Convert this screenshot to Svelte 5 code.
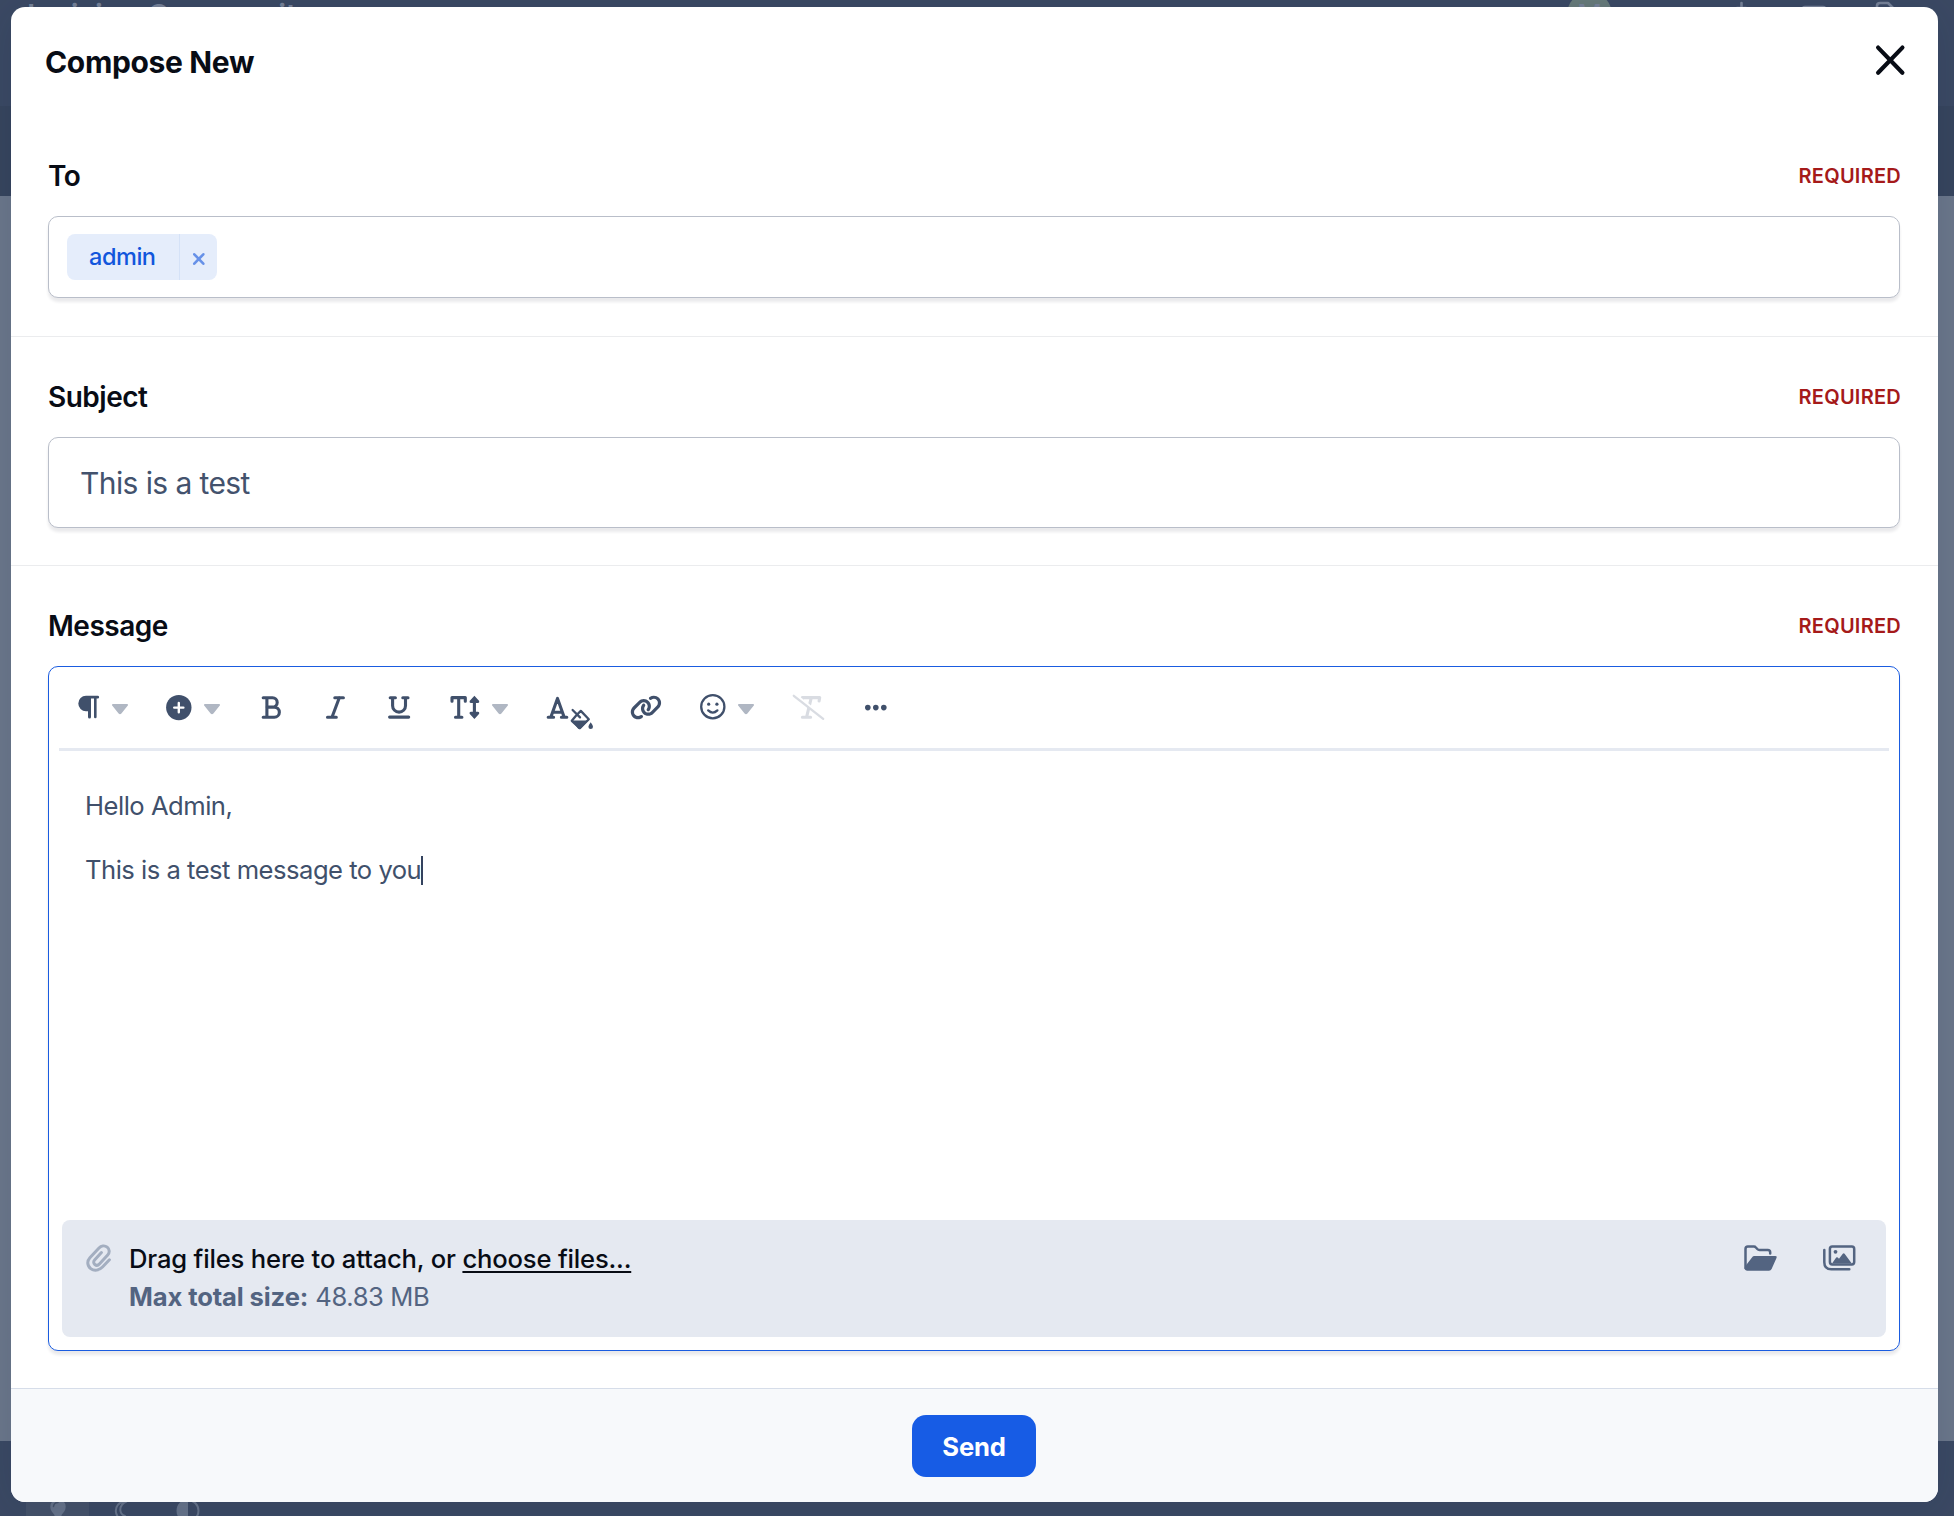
<script>
	let recipients = $state(['admin']);
	let subject = $state('This is a test');
	let message = ['Hello Admin,', 'This is a test message to you'];

	function removeRecipient(name) {
		recipients = recipients.filter((r) => r !== name);
	}
</script>

{#snippet caret()}
	<svg class="caret" width="16" height="41" viewBox="0 0 16 41">
		<path
			d="M1.2 17H14.8a1 1 0 0 1 .8 1.8L9.4 26.4a1.9 1.9 0 0 1-2.8 0L.4 18.8A1 1 0 0 1 1.2 17Z"
		/>
	</svg>
{/snippet}

{#snippet fieldHead(label)}
	<div class="field-head">
		<span class="label">{label}</span>
		<span class="required">REQUIRED</span>
	</div>
{/snippet}

<div class="page">
	<header class="site-header">
		<span class="site-name">Invision Community</span>
		<div class="user-bar">
			<span class="avatar">M</span>
			<svg width="160" height="30" viewBox="0 0 160 30">
				<path d="M5.5 3v22M1 8h9" />
				<rect x="66" y="7" width="24" height="17" rx="3" />
				<path d="M141 25V6q0-3 3-3h8l6 6v16" />
			</svg>
		</div>
	</header>
	<div class="site-nav"></div>
	<div class="site-body"></div>
	<footer class="site-footer">
		<div class="theme-switch">
			<span class="theme active">
				<svg width="20" height="15" viewBox="0 0 20 15">
					<path
						class="solid"
						d="M10 -2a7.7 7.7 0 0 1 7.7 8c0 3.5-2.5 5.5-4.2 8v1h-7v-1C4.800 11.500 2.300 9.500 2.300 6A7.700 7.700 0 0 1 10-2Z"
					/>
					<path class="shade" d="M5.500 5.500a4.500 4.500 0 0 1 4.500-4" />
				</svg>
			</span>
			<span class="theme">
				<svg width="20" height="15" viewBox="0 0 20 15">
					<path d="M12 .5Q4.800 3 4.800 10q.2 3 1.600 5M15.500.5Q9.300 3 9.300 9q.3 4.500 4.700 6" />
				</svg>
			</span>
			<span class="theme wide">
				<svg width="26" height="15" viewBox="0 0 26 15">
					<circle cx="13" cy="9.700" r="10.500" />
					<path class="solid" d="M13-.8a10.500 10.500 0 0 0 0 21Z" />
				</svg>
			</span>
		</div>
	</footer>
</div>

<div class="modal">
	<div class="modal-header">
		<h3>Compose New</h3>
		<button type="button" class="close" aria-label="Close">
			<svg width="30" height="30" viewBox="0 0 30 30">
				<path d="M3.100 2.600 27.400 27.700M27.400 2.600 3.100 27.700" />
			</svg>
		</button>
	</div>

	<section>
		{@render fieldHead('To')}
		<div class="control recipients">
			{#each recipients as name (name)}
				<span class="chip">
					<span class="chip-name">{name}</span>
					<button type="button" aria-label="Remove" onclick={() => removeRecipient(name)}>
						<svg width="12" height="12" viewBox="0 0 12 12">
							<path d="M1.300 1.300 10.300 10.700M10.300 1.300 1.300 10.700" />
						</svg>
					</button>
				</span>
			{/each}
		</div>
	</section>

	<section>
		{@render fieldHead('Subject')}
		<input class="control" type="text" bind:value={subject} aria-label="Subject" />
	</section>

	<section class="last">
		{@render fieldHead('Message')}
		<div class="control editor">
			<div class="toolbar">
				<!-- paragraph -->
				<span class="tool">
					<svg width="22" height="41" viewBox="0 0 22 41">
						<path
							class="fill"
							d="M8 8.8H19.7a1.4 1.4 0 0 1 0 2.8H18.6V30a1.3 1.3 0 0 1-2.6 0V11.6H13V30a1.5 1.5 0 0 1-3 0V24.2H8A7.7 7.7 0 0 1 8 8.8Z"
						/>
					</svg>
					{@render caret()}
				</span>
				<!-- insert -->
				<span class="tool">
					<svg width="26" height="41" viewBox="0 0 26 41">
						<circle class="fill" cx="12.8" cy="20.6" r="12.7" />
						<path class="knockout" d="M12.8 16v9.2M8.2 20.6h9.2" />
					</svg>
					{@render caret()}
				</span>
				<!-- bold -->
				<span class="tool">
					<svg width="28" height="41" viewBox="0 0 28 41">
						<path
							d="M5.2 10.7h9.3a4.7 4.7 0 0 1 0 9.4H8.7M14.5 20.1h1.8a5 5 0 0 1 0 10.1H5.2M8.9 10.7v19.5"
						/>
					</svg>
				</span>
				<!-- italic -->
				<span class="tool">
					<svg width="23" height="41" viewBox="0 0 23 41">
						<path d="M10.8 10.7h8.6M3.5 30.2h8.8M15.3 10.7 8 30.2" />
					</svg>
				</span>
				<!-- underline -->
				<span class="tool">
					<svg width="27" height="41" viewBox="0 0 27 41">
						<path d="M5.2 10.7h5.2M17.8 10.7H23M7.6 10.7v8a6.4 6.4 0 0 0 12.900 0v-8M4.600 30.100H23.700" />
					</svg>
				</span>
				<!-- font size -->
				<span class="tool">
					<svg width="30" height="41" viewBox="0 0 30 41">
						<path d="M2 14.2v-3.6H15.3v3.6M8.7 10.6v19.6M5.5 30.2h6.4M24.4 13v16" />
						<path
							class="fill"
							d="M24.4 8.800l4.800 5.300q.4 2-1.200 2h-7.200q-1.600 0-1.200-2ZM24.400 32l4.800-5.300q.4-2-1.200-2h-7.200q-1.600 0-1.200 2Z"
						/>
					</svg>
					{@render caret()}
				</span>
				<!-- colour -->
				<span class="tool">
					<svg width="47" height="41" viewBox="0 0 47 41">
						<path d="M2.2 30.2h5.4M15.400 30.200h5.400M4.800 30.200l6.700-18.800 6.700 18.800M7 25.200h9" />
						<path class="thin" d="M26.600 23 34 30.400M30.600 28 34.800 23.900l8 8.300-9 9-8-7.400 4.800-5.800" />
						<path class="fill" d="M25.600 33.400H42.400L34.800 41.400q-1.400 1.200-2.800 0Z" />
						<path class="fill" d="M44.700 35.200q2.400 3.200 2.300 4.600a2.300 2.300 0 0 1-4.600 0q0-1.400 2.300-4.600Z" />
					</svg>
				</span>
				<!-- link -->
				<span class="tool">
					<svg width="31" height="41" viewBox="0 0 31 41">
						<g transform="translate(-1.1 7.6) scale(.0502)">
							<path
								class="fill"
								d="M579.8 267.7c56.5-56.5 56.5-148 0-204.5c-50-50-128.8-56.5-186.3-15.4l-1.6 1.1c-14.4 10.3-17.7 30.3-7.4 44.6s30.3 17.7 44.6 7.4l1.6-1.1c32.1-22.9 76-19.3 103.8 8.6c31.5 31.5 31.5 82.5 0 114L422.3 334.8c-31.5 31.5-82.5 31.5-114 0c-27.9-27.9-31.5-71.8-8.6-103.8l1.1-1.6c10.3-14.4 6.9-34.4-7.4-44.6s-34.4-6.9-44.6 7.4l-1.1 1.6C206.5 251.2 213 330 263 380c56.5 56.5 148 56.5 204.5 0L579.8 267.7zM60.2 244.3c-56.5 56.5-56.5 148 0 204.5c50 50 128.8 56.5 186.3 15.4l1.6-1.1c14.4-10.3 17.7-30.3 7.4-44.6s-30.3-17.7-44.6-7.4l-1.6 1.1c-32.1 22.9-76 19.3-103.8-8.6C74 372 74 321 105.5 289.5L217.7 177.2c31.5-31.5 82.5-31.5 114 0c27.9 27.9 31.5 71.8 8.6 103.9l-1.1 1.6c-10.3 14.4-6.9 34.4 7.4 44.6s34.4 6.9 44.6-7.4l1.1-1.6C433.5 260.8 427 182 377 132c-56.5-56.5-148-56.5-204.5 0L60.2 244.3z"
							/>
						</g>
					</svg>
				</span>
				<!-- emoji -->
				<span class="tool">
					<svg width="26" height="41" viewBox="0 0 26 41">
						<circle class="thin" cx="12.8" cy="19.7" r="11.6" />
						<circle class="fill" cx="8.7" cy="17.2" r="1.6" />
						<circle class="fill" cx="16.9" cy="17.2" r="1.6" />
						<path class="thin" d="M8.2 23.4q4.6 4.4 9.2 0" />
					</svg>
					{@render caret()}
				</span>
				<!-- clear formatting -->
				<span class="tool disabled">
					<svg width="35" height="41" viewBox="0 0 35 41">
						<path d="M10.3 14v-3.4H27.7l-.6 3.4M19.3 10.6 14.6 30.2M10.4 30.2h8.2" />
						<path class="knockout" d="M3.2 7.5 34 32" />
						<path class="thin" d="M1.8 8.8 31.2 31.8" />
					</svg>
				</span>
				<!-- more -->
				<span class="tool">
					<svg width="22" height="41" viewBox="0 0 22 41">
						<circle class="fill" cx="2.8" cy="20.6" r="2.8" />
						<circle class="fill" cx="10.8" cy="20.6" r="2.8" />
						<circle class="fill" cx="18.8" cy="20.6" r="2.8" />
					</svg>
				</span>
			</div>

			<div class="message">
				{#each message as line, i}
					<p>
						<span>{line}</span>{#if i === message.length - 1}<i class="cursor"></i>{/if}
					</p>
				{/each}
			</div>

			<div class="attach">
				<svg class="clip" width="26" height="28" viewBox="0 0 26 28">
					<path
						d="M23.4 15.8l-6.9 7.2c-3.2 3.4-8.2 4.4-11.8 1.6c-3.8-3-3.7-7.8-.8-10.9L13 4c2-2.2 5.6-2.9 8.2-.8c2.7 2.2 2.5 5.6.5 7.8l-8.3 9c-1.2 1.3-3.2 1.6-4.6.5c-1.5-1.2-1.4-3.2-.2-4.5l6.8-7.4"
					/>
				</svg>
				<div class="attach-text">
					<div class="drag">
						<span>Drag files here to attach, or</span> <a href="#files">choose files...</a>
					</div>
					<div class="size"><strong>Max total size:</strong> <span>48.83 MB</span></div>
				</div>
				<div class="attach-actions">
					<svg width="33" height="27" viewBox="0 0 33 27">
						<path
							d="M1.5 23V4q0-2.4 2.4-2.4h6q1.2 0 2 .9l1.4 1.5q.9 1 2.2 1h8.3q2.4 0 2.4 2.4V8.4"
						/>
						<path
							class="fill"
							d="M10.4 11H31.4q2 0 1.2 1.8L27.6 24q-.8 1.7-2.6 1.7H3.4Q.8 25.7.6 23l2-3.4L8 12.4q.9-1.4 2.4-1.4Z"
						/>
					</svg>
					<svg width="33" height="27" viewBox="0 0 33 27">
						<path d="M1.3 5v12.3q0 7 7 7H26.3" />
						<rect x="6.9" y="1.6" width="24.3" height="17.8" rx="2.4" />
						<circle class="fill" cx="12.5" cy="6.8" r="1.9" />
						<path
							class="fill"
							d="M9 18.4 13.2 12.6q.8-.9 1.6 0l1.2 1.1 3.8-5q.9-1 1.8 0L28.8 18.4Z"
						/>
					</svg>
				</div>
			</div>
		</div>
	</section>

	<div class="modal-footer">
		<button type="submit" class="send">Send</button>
	</div>
</div>

<style>
	:global(body) {
		overflow: hidden;
		font-family: Inter, 'Liberation Sans', sans-serif;
		color: #40506b;
	}

	* {
		box-sizing: border-box;
	}

	svg {
		display: block;
		overflow: visible;
		fill: none;
		stroke: currentColor;
		stroke-linecap: round;
		stroke-linejoin: round;
	}

	svg .fill {
		fill: currentColor;
		stroke: none;
	}

	button {
		font-family: inherit;
		border: none;
		padding: 0;
		background: none;
		cursor: pointer;
	}

	/* page behind the modal */
	.page {
		display: grid;
		grid-template-rows: 106px 90px 1245px 75px;
		height: 1516px;
		overflow: hidden;
		color: #778297;
	}

	.site-header {
		display: flex;
		justify-content: space-between;
		padding: 0 58px 0 27px;
		background-color: #3b4963;
	}

	.site-name {
		margin-top: -4px;
		font-size: 30px;
		line-height: 38px;
		font-weight: 600;
	}

	.user-bar {
		display: flex;
		gap: 124px;
	}

	.user-bar svg {
		stroke-width: 2.6;
	}

	.avatar {
		width: 45px;
		height: 45px;
		margin-top: -8px;
		border-radius: 50%;
		background-color: #677a79;
		text-align: center;
		font-size: 27px;
		line-height: 46px;
		font-weight: 500;
	}

	.site-nav {
		background-color: #37455d;
	}

	.site-body {
		background-color: #6b778a;
	}

	.site-footer {
		display: flex;
		align-items: flex-end;
		padding-left: 26px;
		background-color: #3b4963;
	}

	.theme-switch {
		display: flex;
		color: #667389;
	}

	.theme {
		display: flex;
		justify-content: center;
		width: 63px;
		height: 15px;
	}

	.theme.wide {
		width: 72px;
	}

	.theme.active {
		background-color: #455269;
	}

	.theme svg {
		stroke-width: 2;
	}

	.theme .solid {
		fill: currentColor;
		stroke: none;
	}

	.theme .shade {
		stroke: #455269;
		stroke-width: 1.5;
	}

	/* modal */
	.modal {
		position: absolute;
		left: 11px;
		top: 7px;
		width: 1927px;
		height: 1495px;
		display: flex;
		flex-direction: column;
		border-radius: 14px;
		overflow: hidden;
		background-color: #fff;
		box-shadow: 0 5px 40px rgba(20, 35, 70, 0.12);
	}

	.modal-header {
		display: flex;
		align-items: center;
		justify-content: space-between;
		height: 109px;
		padding: 0 33px 0 34px;
		color: #080c15;
	}

	h3 {
		margin: 0;
		font-size: 30px;
		line-height: 38px;
		font-weight: 700;
		letter-spacing: -0.35px;
	}

	.close {
		padding-bottom: 3px;
		color: #080c15;
	}

	.close svg {
		stroke-width: 4.2;
	}

	section {
		padding: 42px 38px 37px 37px;
		border-bottom: 1px solid #ebecee;
	}

	section.last {
		border-bottom: none;
	}

	.field-head {
		display: flex;
		align-items: center;
		justify-content: space-between;
		height: 34px;
		margin-bottom: 24px;
		padding-top: 1px;
	}

	.label {
		font-size: 28px;
		font-weight: 600;
		letter-spacing: -0.5px;
		color: #080c15;
	}

	.required {
		margin-right: -1px;
		font-size: 20px;
		font-weight: 600;
		letter-spacing: 0.25px;
		color: #a51a1a;
	}

	.control {
		display: block;
		width: 100%;
		border: 1px solid #b9bec9;
		border-radius: 10px;
		background-color: #fff;
		box-shadow: 0 4px 3px rgba(20, 25, 40, 0.09);
	}

	.recipients {
		display: flex;
		align-items: center;
		height: 82px;
		margin-bottom: 1px;
		padding-left: 18px;
	}

	.chip {
		display: flex;
		height: 46px;
		border-radius: 8px;
		background-color: #e5edfb;
		color: #1256dc;
	}

	.chip-name {
		width: 112px;
		padding-left: 22px;
		font-size: 23.5px;
		line-height: 46px;
		font-weight: 500;
		letter-spacing: -0.45px;
	}

	.chip button {
		display: flex;
		align-items: center;
		justify-content: center;
		width: 38px;
		padding-top: 3px;
		border-left: 1px solid #d5e2f7;
		color: #6791e8;
	}

	.chip svg {
		stroke-width: 2.6;
	}

	input.control {
		height: 91px;
		padding: 0 31px;
		font-family: inherit;
		font-size: 30px;
		letter-spacing: -0.6px;
		color: #43526d;
		outline: none;
	}

	.editor {
		display: flex;
		flex-direction: column;
		height: 685px;
		padding: 0 13px 13px;
		border-color: #1a5ce0;
	}

	.toolbar {
		display: flex;
		align-items: center;
		gap: 38px;
		height: 84px;
		margin: 0 -3px;
		padding-left: 19px;
		border-bottom: 3px solid #e5e9f1;
	}

	.tool {
		display: flex;
		gap: 12px;
	}

	.tool svg {
		stroke-width: 3.1;
	}

	.tool .thin {
		stroke-width: 2.3;
	}

	.tool .knockout {
		stroke: #fff;
		stroke-width: 2.4;
	}

	.tool .caret {
		fill: #b0b7c3;
		stroke: none;
	}

	.tool.disabled {
		color: #d9dce2;
	}

	.message {
		flex: 1;
		padding: 36px 23px;
		font-size: 25.6px;
		line-height: 38.4px;
		letter-spacing: -0.5px;
	}

	.message p {
		display: flex;
		align-items: center;
		margin: 0 0 25.6px;
	}

	.cursor {
		width: 2px;
		height: 29px;
		background-color: #34435f;
	}

	.attach {
		display: flex;
		height: 117px;
		padding: 20px 30px 0 24px;
		border-radius: 8px;
		background-color: #e5e9f1;
		color: #536481;
	}

	.clip {
		margin-top: 4px;
		color: #a3aec0;
		stroke-width: 3;
	}

	.attach-text {
		flex: 1;
		margin-left: 17px;
		font-size: 25.6px;
		line-height: 38px;
	}

	.drag {
		font-weight: 500;
		letter-spacing: -0.18px;
		color: #080c15;
	}

	.drag a {
		color: inherit;
		text-decoration-thickness: 2px;
		text-underline-offset: 3px;
	}

	.size {
		letter-spacing: -0.12px;
	}

	.size span {
		letter-spacing: -0.4px;
	}

	.attach-actions {
		display: flex;
		gap: 46px;
		padding-top: 5px;
	}

	.attach-actions svg {
		stroke-width: 2.5;
	}

	.modal-footer {
		flex: 1;
		display: flex;
		align-items: flex-start;
		justify-content: center;
		padding: 26px 1px 0 0;
		border-top: 1px solid #d6dde9;
		background-color: #f7f9fb;
	}

	.send {
		width: 124px;
		height: 62px;
		border-radius: 14px;
		background-color: #175ce5;
		color: #fff;
		font-size: 25.6px;
		font-weight: 700;
		letter-spacing: -0.2px;
	}
</style>
